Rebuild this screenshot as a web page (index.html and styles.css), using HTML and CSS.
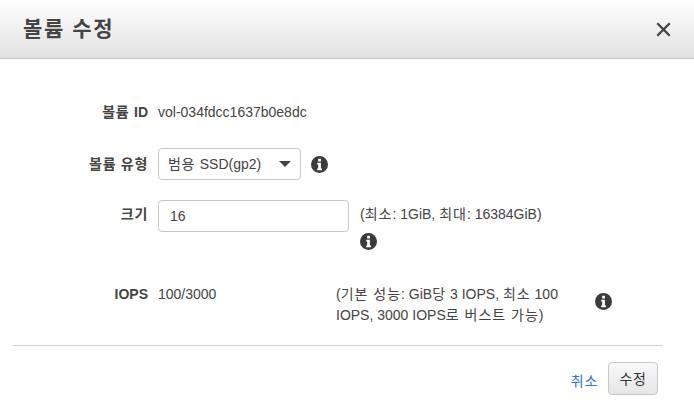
FILE: index.html
```html
<!DOCTYPE html>
<html lang="ko">
<head>
<meta charset="utf-8">
<title>볼륨 수정</title>
<link rel="stylesheet" href="styles.css">
</head>
<body>
<svg class="sprite" width="0" height="0" aria-hidden="true">
  <symbol id="info" viewBox="0 0 18 18">
    <path fill-rule="evenodd" d="M9 0a9 9 0 1 1 0 18A9 9 0 0 1 9 0ZM7.6 3h2.9v2.7H7.6ZM6.6 7.2h3.9v6.1h1.1v1.7H6.5v-1.7h1.1V8.9h-1Z"/>
  </symbol>
</svg>
<div class="dialog">
  <header class="head">
    <h1 class="title">볼륨 수정</h1>
    <svg class="close" viewBox="0 0 14 14" width="15" height="15"><path d="M1.2 1.2 12.8 12.8M12.8 1.2 1.2 12.8"/></svg>
  </header>
  <main class="form">
    <div class="row row-id">
      <div class="label"><span class="ko">볼륨 </span>ID</div>
      <div class="value">vol-034fdcc1637b0e8dc</div>
    </div>
    <div class="row row-type">
      <div class="label"><span class="ko">볼륨 유형</span></div>
      <div class="select"><span><span class="ko">범용 </span>SSD(gp2)</span><i class="caret"></i></div>
      <svg class="info info-type"><use href="#info"/></svg>
    </div>
    <div class="row row-size">
      <div class="label"><span class="ko">크기</span></div>
      <div class="input">16</div>
      <div class="note">
        <div class="note-text">(<span class="ko">최소</span>: 1GiB, <span class="ko">최대</span>: 16384GiB)</div>
        <svg class="info info-size"><use href="#info"/></svg>
      </div>
    </div>
    <div class="row row-iops">
      <div class="label">IOPS</div>
      <div class="value iops-value">100/3000</div>
      <div class="iops-note">
        <div class="iops-line">(<span class="ko">기본 성능</span>: GiB<span class="ko">당</span> 3 IOPS, <span class="ko">최소</span> 100</div>
        <div class="iops-line">IOPS, 3000 IOPS<span class="ko">로 버스트 가능</span>)</div>
      </div>
      <svg class="info info-iops"><use href="#info"/></svg>
    </div>
  </main>
  <footer class="foot">
    <a class="cancel ko" href="#">취소</a>
    <button class="submit ko" type="button">수정</button>
  </footer>
</div>
</body>
</html>
```
FILE: styles.css
```css
* { box-sizing: border-box; }
html, body { margin: 0; padding: 0; background: #fff; }
body {
  width: 694px;
  height: 413px;
  overflow: hidden;
  font-family: "Liberation Sans", "Noto Sans CJK KR", sans-serif;
  font-size: 14px;
  line-height: 20px;
  color: #444;
}
.ko { letter-spacing: 0.7px; }
.note-text .ko, .iops-note .ko { letter-spacing: 1px; }
.sprite { position: absolute; }
.head {
  height: 59px;
  display: flex;
  align-items: center;
  justify-content: space-between;
  padding: 0 23px 0 23px;
  background: linear-gradient(#ffffff, #e1e1e1);
  border-bottom: 1px solid #c8c8c8;
}
.title { margin: 0; font-size: 21px; font-weight: 700; line-height: 24px; letter-spacing: 1.6px; color: #444; }
.close { fill: none; stroke: #444; stroke-width: 2.2; }
.form { padding-top: 43px; height: 287px; border-bottom: 1px solid #d0d0d0; margin: 0 31px 0 13px; }
.row { display: flex; align-items: flex-start; }
.label {
  width: 135px;
  flex: none;
  margin-right: 10px;
  text-align: right;
  font-weight: 700;
}
.row-id { height: 46px; }
.row-type { height: 52px; align-items: center; }
.row-type { padding-bottom: 20px; }
.select {
  width: 143px;
  height: 32px;
  display: flex;
  align-items: center;
  justify-content: space-between;
  padding: 0 9px 0 9px;
  border: 1px solid #c8c8c8;
  border-radius: 4px;
}
.caret {
  width: 0; height: 0;
  border-left: 6px solid transparent;
  border-right: 6px solid transparent;
  border-top: 6px solid #444;
}
.info { width: 17px; height: 17px; fill: #3b3b3b; flex: none; display: block; }
.info-type { margin-left: 10px; }
.row-size { height: 84px; }
.row-size .label { margin-top: 4px; }
.input {
  width: 191px;
  height: 32px;
  padding: 5px 11px;
  border: 1px solid #c8c8c8;
  border-radius: 4px;
}
.note { margin-left: 11px; padding-top: 4px; }
.info-size { margin-top: 9px; }
.iops-value { width: 178px; flex: none; }
.iops-note { width: 241px; flex: none; }
.iops-line { height: 21px; line-height: 21px; white-space: nowrap; }
.info-iops { margin: 9px 0 0 18px; }
.foot {
  height: 67px;
  display: flex;
  align-items: flex-start;
  justify-content: flex-end;
  padding: 16px 36px 0 0;
  gap: 10px;
}
.cancel { margin-top: 9px; color: #2f74d0; text-decoration: none; }
.submit {
  width: 50px;
  height: 33px;
  padding: 0;
  font: inherit;
  letter-spacing: 0.7px;
  color: #333;
  background: linear-gradient(#f8f8f8, #e6e6e6);
  border: 1px solid #c8c8c8;
  border-radius: 4px;
}
```
